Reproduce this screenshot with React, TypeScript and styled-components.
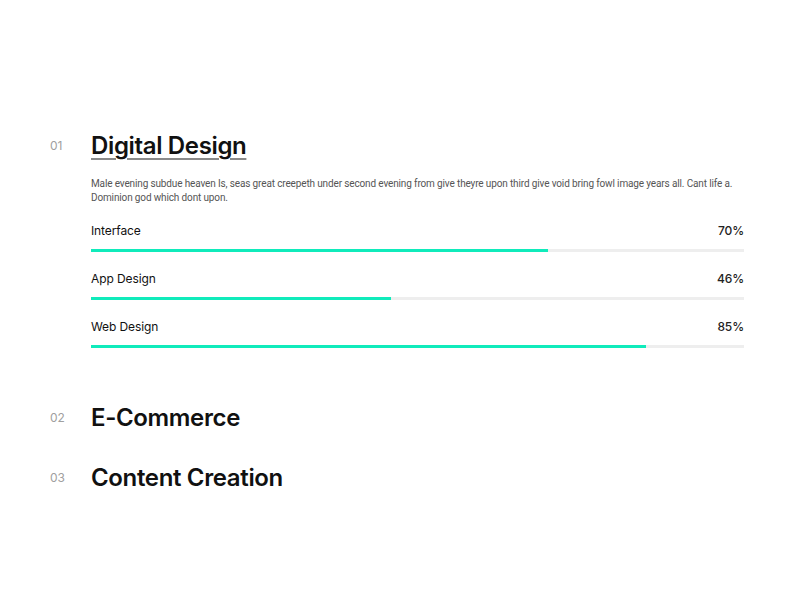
import React from "react";
import styled, { createGlobalStyle } from "styled-components";

const Global = createGlobalStyle`
  html, body { margin: 0; padding: 0; background: #ffffff; }
  body { font-family: Inter, "Noto Sans", sans-serif; color: #111; }
`;

const Page = styled.div`
  width: 800px;
  height: 600px;
  padding-top: 130px;
  box-sizing: border-box;
`;

const List = styled.div`
  margin-left: 50px;
  width: 694px;
  display: flex;
  flex-direction: column;
  gap: 28px;
`;

const Item = styled.section<{ $open?: boolean }>`
  display: grid;
  grid-template-columns: 41px 1fr;
  padding-bottom: ${(p) => (p.$open ? "26px" : "0")};
`;

const Num = styled.div`
  font-size: 12px;
  line-height: 32px;
  color: #a0a0a0;
  font-weight: 400;
`;

const Body = styled.div`
  display: flex;
  flex-direction: column;
`;

const Title = styled.h2<{ $active?: boolean }>`
  margin: 0;
  font-size: 24px;
  line-height: 32px;
  font-weight: 600;
  letter-spacing: -0.35px;
  color: #111;
  text-decoration: ${(p) => (p.$active ? "underline" : "none")};
  text-decoration-color: #8a8a8a;
  text-decoration-thickness: 2px;
  text-underline-offset: 4px;
`;

const Desc = styled.p`
  margin: 15px 0 0;
  font-family: Roboto, "Noto Sans", sans-serif;
  font-size: 10px;
  line-height: 14px;
  letter-spacing: -0.14px;
  color: #555;
`;

const Skills = styled.div`
  margin-top: 18px;
  display: flex;
  flex-direction: column;
  gap: 19px;
`;

const Skill = styled.div`
  display: flex;
  flex-direction: column;
  gap: 10px;
`;

const SkillHead = styled.div`
  display: flex;
  justify-content: space-between;
  font-size: 12px;
  line-height: 16px;
  letter-spacing: -0.1px;
  color: #111;
`;

const Pct = styled.span`
  font-weight: 500;
  color: #222;
`;

const Track = styled.div`
  height: 3px;
  background: #eeeeee;
`;

const Fill = styled.div`
  height: 100%;
  background: #10ebbb;
`;

const skills = [
  { name: "Interface", value: 70 },
  { name: "App Design", value: 46 },
  { name: "Web Design", value: 85 },
];

export default function App() {
  return (
    <Page>
      <Global />
      <List>
        <Item $open>
          <Num>01</Num>
          <Body>
            <Title $active>Digital Design</Title>
            <Desc>
              Male evening subdue heaven Is, seas great creepeth under second evening from give theyre upon third give void bring fowl image years all. Cant life a. Dominion god which dont upon.
            </Desc>
            <Skills>
              {skills.map((s) => (
                <Skill key={s.name}>
                  <SkillHead>
                    <span>{s.name}</span>
                    <Pct>{s.value}%</Pct>
                  </SkillHead>
                  <Track>
                    <Fill style={{ width: `${s.value}%` }} />
                  </Track>
                </Skill>
              ))}
            </Skills>
          </Body>
        </Item>
        <Item>
          <Num>02</Num>
          <Body>
            <Title>E-Commerce</Title>
          </Body>
        </Item>
        <Item>
          <Num>03</Num>
          <Body>
            <Title>Content Creation</Title>
          </Body>
        </Item>
      </List>
    </Page>
  );
}
